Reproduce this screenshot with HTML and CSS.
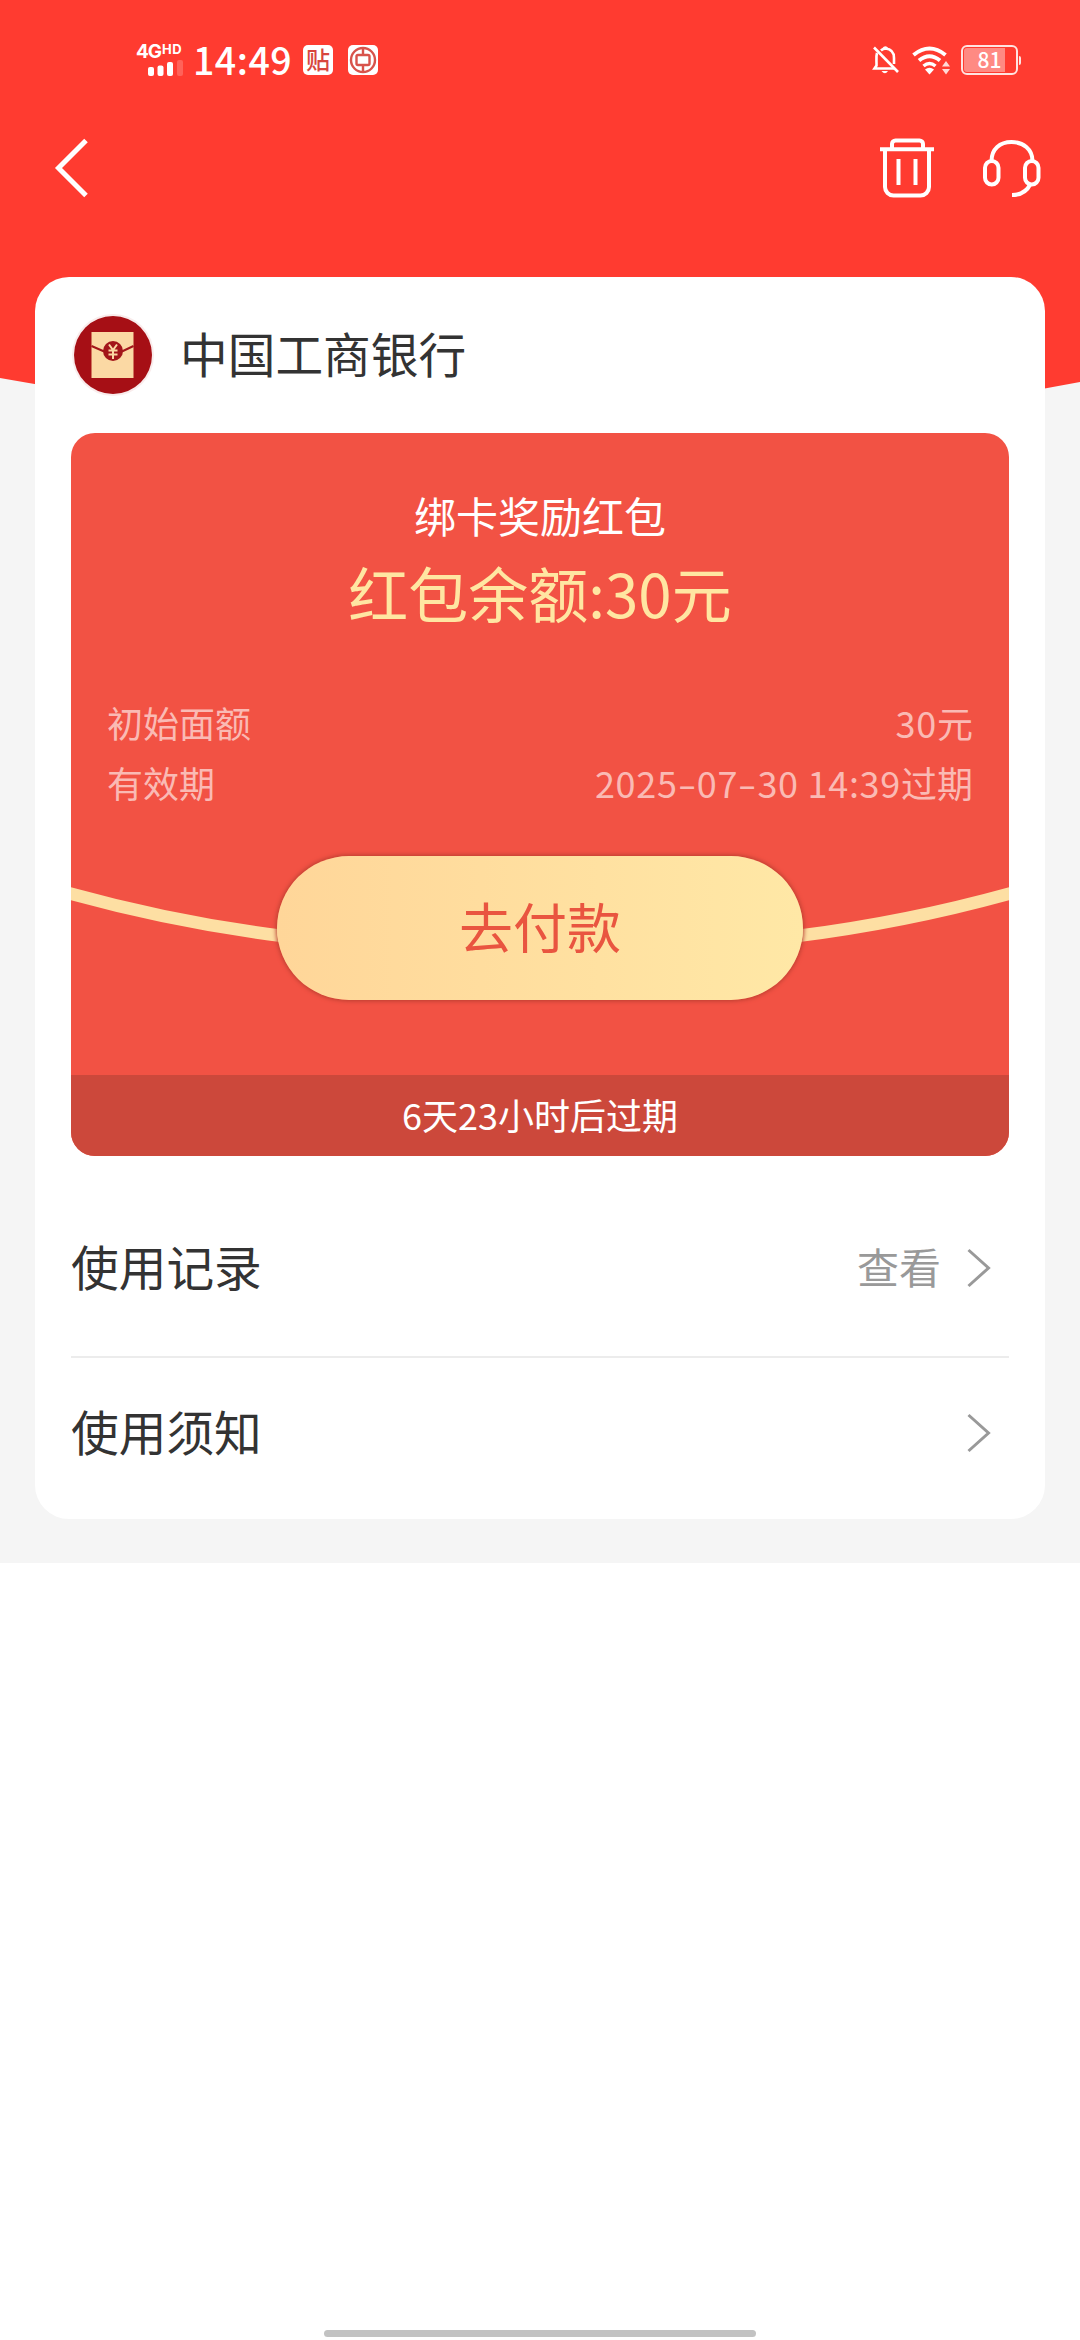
FILE: index.html
```html
<!DOCTYPE html>
<html lang="zh-CN">
<head>
<meta charset="utf-8">
<title>红包详情</title>
<link rel="stylesheet" href="styles.css">
</head>
<body>
<main class="page">
  <svg class="backdrop" viewBox="0 0 1080 440"><path d="M0 0H1080V382Q560 481 0 378Z" fill="#ff3b30"/></svg>

  <header class="status">
    <div class="network">
      <div class="net-type">4G<span class="hd">HD</span></div>
      <svg width="36" height="14" viewBox="0 0 36 14" fill="#fff"><rect y="5" width="6" height="9" rx="2"/><rect x="9.500" y="3.500" width="6" height="10.500" rx="2"/><rect x="19" y="0" width="6" height="14" rx="2"/><rect x="29" y="-2" width="6" height="16" rx="2" opacity=".2"/></svg>
    </div>
    <div class="clock">14:49</div>
    <div class="app-tag">贴</div>
    <svg class="bank-tag" width="30" height="30" viewBox="0 0 30 30"><rect width="30" height="30" rx="5" fill="#fff"/><g fill="none" stroke="#d8534b" stroke-width="2.400"><circle cx="15" cy="15" r="12"/><path d="M15 4v7M15 19v7"/><rect x="8.500" y="10" width="13" height="10" rx="1.500"/></g><path d="M12 13.500h6v3h-6z" fill="#fff"/></svg>
    <svg class="bell" width="28" height="30" viewBox="0 0 28 30"><g fill="none" stroke="#fff" stroke-width="2.600"><path d="M2 2.500L26 27"/><path d="M5 8C4 11 4.500 15 4.500 18V20.500L2.500 23.500H22M9 5.500C11 3.500 13 4 13.500 3.500C19 4 22 7.500 22 13V19"/></g><path d="M10 3.500Q13.500-1 16.500 3.500ZM9.500 26H16Q13 30.500 9.500 26Z" fill="#fff"/></svg>
    <svg class="wifi" width="39" height="30" viewBox="0 0 39 30"><g fill="none" stroke="#fff" stroke-width="4"><path d="M1.500 10Q17.500-3 33.500 10"/><path d="M7 15.500Q17.500 7 28 15.500"/><path d="M11.500 21Q17.500 16 23.500 21" stroke-width="3.500"/></g><path d="M13 24.500Q17.500 21 22 24.500L17.500 29.500Z" fill="#fff"/><path d="M30 21.500L34 16L38 21.500ZM30 24L34 29.500L38 24Z" fill="#ffd9d6"/></svg>
    <div class="battery"><div class="battery-body">81</div><i class="battery-tip"></i></div>
  </header>

  <nav class="toolbar">
    <svg width="34" height="56" viewBox="0 0 34 56"><path d="M32 0.500L4.500 28L32 55.500" fill="none" stroke="#fff" stroke-width="5"/></svg>
    <svg class="trash" width="54" height="60" viewBox="0 0 54 60"><g fill="none" stroke="#fff" stroke-width="4"><path d="M12 10V6a3.500 3.500 0 0 1 3.500-3.500h24A3.500 3.500 0 0 1 43 6v4M0 11.300H54M5 12V49a8.500 8.500 0 0 0 8.500 8.500h27A8.500 8.500 0 0 0 49 49V12M18.500 21V47M35.500 21V47"/></g></svg>
    <svg class="headset" width="58" height="60" viewBox="0 0 58 60"><g fill="none" stroke="#fff" stroke-width="4"><path d="M8.500 23C8.500 11 17 4 28.500 4S49.500 11 49.500 23"/><rect x="2" y="23" width="13.500" height="23.500" rx="6.750"/><rect x="42" y="23" width="13.500" height="23.500" rx="6.750"/><path d="M47.500 46C44 53 38 57 29 57"/></g></svg>
  </nav>

  <section class="card">
    <div class="bank">
      <svg width="82" height="82" viewBox="0 0 82 82"><circle cx="41" cy="41" r="41" fill="#f9ecec"/><circle cx="41" cy="41" r="39" fill="#a60f15"/><rect x="19.500" y="18" width="42" height="46" fill="#fbd9a4"/><path d="M19.500 32L31 37Q41 40 51 37L61.500 32" fill="none" stroke="#a3161a" stroke-width="2"/><circle cx="41" cy="37" r="10" fill="#a3161a"/><path d="M37 30.500L41 36L45 30.500M36.500 36.500H45.500M36.500 40.500H45.500M41 36V45" fill="none" stroke="#fbd9a4" stroke-width="2"/></svg>
      <h1 class="bank-name">中国工商银行</h1>
    </div>

    <div class="coupon">
      <svg class="ribbon" viewBox="0 0 938 723"><path d="M-6 459Q101 489 212 503M944 459Q837 489 726 503" fill="none" stroke="#fddfa3" stroke-width="12.500"/></svg>
      <div class="coupon-title">绑卡奖励红包</div>
      <div class="amount">红包余额:30元</div>
      <dl class="facts">
        <div class="fact"><dt>初始面额</dt><dd><span class="date">30</span>元</dd></div>
        <div class="fact"><dt>有效期</dt><dd><span class="date">2025<b>-</b>07<b>-</b>30 14:39</span>过期</dd></div>
      </dl>
      <button class="pay">去付款</button>
      <div class="expiry">6天23小时后过期</div>
    </div>

    <div class="rows">
      <a class="row"><span class="label">使用记录</span><span class="more">查看</span><svg width="24" height="36" viewBox="0 0 24 36"><path d="M1.500 0L21.500 18L1.500 36" fill="none" stroke="#999" stroke-width="3"/></svg></a>
      <a class="row second"><span class="label">使用须知</span><svg width="24" height="36" viewBox="0 0 24 36"><path d="M1.500 0L21.500 18L1.500 36" fill="none" stroke="#999" stroke-width="3"/></svg></a>
    </div>
  </section>
</main>
<footer class="home"><i class="home-bar"></i></footer>
</body>
</html>
```

FILE: styles.css
```css
* { box-sizing: border-box; }
body {
  margin: 0;
  width: 1080px;
  height: 2340px;
  display: flex;
  flex-direction: column;
  justify-content: space-between;
  background: #fff;
  font-family: "Noto Sans CJK SC", sans-serif;
  overflow: hidden;
}
svg { display: block; flex: none; overflow: visible; }
.page { position: relative; height: 1563px; background: #f5f5f5; }
.backdrop { position: absolute; left: 0; top: 0; width: 1080px; height: 440px; }

.status {
  position: relative;
  height: 120px;
  padding-left: 136px;
  padding-right: 59px;
  display: flex;
  align-items: center;
  color: #fff;
}
.network { width: 48px; display: flex; flex-direction: column; align-items: flex-end; gap: 3px; }
.net-type { width: 48px; height: 14px; display: flex; align-items: flex-start; font: 700 19px/14px Inter, sans-serif; letter-spacing: -1px; }
.hd { font-size: 13px; line-height: 9px; margin-left: 1px; letter-spacing: 0.500px; }
.clock { margin-left: 9px; width: 96px; font-size: 37.500px; font-weight: 500; line-height: 56px; letter-spacing: 0.500px; padding-bottom: 2px; white-space: nowrap; }
.app-tag { margin-left: 14px; width: 30px; height: 30px; border-radius: 5px; background: #fff; color: #d8463e; font-size: 24px; font-weight: 500; line-height: 27px; text-align: center; }
.bank-tag { margin-left: 15px; }
.bell { margin-left: auto; }
.wifi { margin-left: 12px; }
.battery { margin-left: 10px; display: flex; align-items: center; gap: 1px; }
.battery-body { width: 57px; height: 30px; border: 2px solid #ffe4e1; border-radius: 6px; padding: 1px; background: linear-gradient(90deg, #ff8a83 41px, transparent 41px) content-box; text-align: center; font-size: 21px; font-weight: 500; line-height: 23px; }
.battery-tip { width: 2px; height: 9px; background: #ffe4e1; border-radius: 0 2px 2px 0; }

.toolbar { position: relative; height: 157px; padding: 0 39px 62px 54px; display: flex; align-items: center; }
.trash { margin-left: auto; }
.headset { margin-left: 49px; }

.card { position: relative; margin: 0 35px; height: 1242px; padding: 0 36px; border-radius: 34px; background: #fff; }
.bank { height: 156px; display: flex; align-items: center; gap: 26px; }
.bank-name { margin: 0; padding-bottom: 5px; font-size: 47.700px; font-weight: 400; line-height: 64px; color: #333; }
.bank svg { margin-left: 1px; }

.coupon { position: relative; height: 723px; padding-top: 52px; border-radius: 24px; background: #f25244; overflow: hidden; display: flex; flex-direction: column; align-items: center; }
.ribbon { position: absolute; left: 0; top: 0; width: 938px; height: 723px; }
.coupon-title { font-size: 42px; line-height: 60px; color: #fff; }
.amount { margin-top: 7px; font-size: 60px; line-height: 80px; color: #ffe6a2; }
.facts { margin: 60px 0 0; width: 100%; padding: 0 36px; }
.fact { display: flex; justify-content: space-between; font-size: 36px; line-height: 60px; color: #fabab4; }
dd { margin: 0; }
.date { letter-spacing: 0.700px; }
.date b { display: inline-block; font-weight: 400; margin: 0 3px; transform: scaleX(1.5); }
.pay { position: relative; margin: 44px 0 0; width: 526px; height: 144px; padding: 0 0 5px; border: 0; border-radius: 72px; background: linear-gradient(90deg, #ffd699, #ffe8a6); box-shadow: 0 0 4px 1px #b83e30; font: 400 54px/72px "Noto Sans CJK SC", sans-serif; color: #e95540; flex: none; }
.expiry { margin-top: 75px; width: 100%; height: 81px; padding-bottom: 3px; background: #cc483b; color: #fff; font-size: 36px; line-height: 78px; text-align: center; }

.rows { padding-top: 24px; }
.row { height: 178px; padding-right: 18px; display: flex; align-items: center; border-bottom: 2px solid #ececec; }
.second { height: 150px; border-bottom: 0; }
.label { flex: 1; padding-bottom: 5px; font-size: 47.700px; line-height: 64px; color: #333; }
.more { margin-right: 26px; padding-bottom: 4px; font-size: 42px; line-height: 60px; color: #999; }

.home { height: 10px; display: flex; justify-content: center; }
.home-bar { width: 432px; height: 7px; border-radius: 4px; background: #c2c2c2; }
```
